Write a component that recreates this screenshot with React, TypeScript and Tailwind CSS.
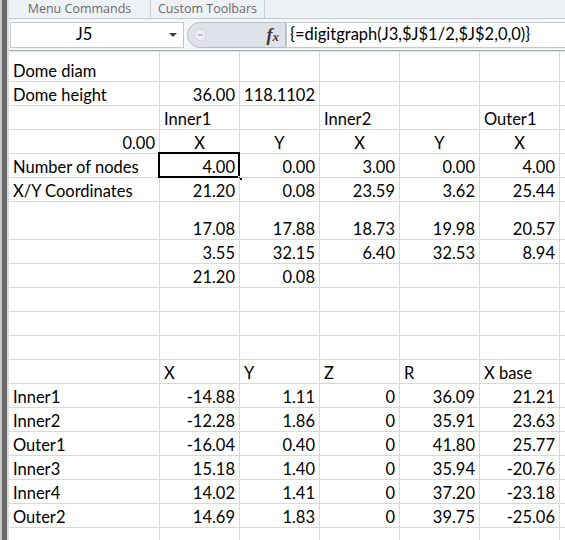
import React from "react";

type Cell = { t: string; a?: "l" | "r" | "c" };

const L = (t: string): Cell => ({ t, a: "l" });
const R = (t: string): Cell => ({ t, a: "r" });
const C = (t: string): Cell => ({ t, a: "c" });
const E: Cell = { t: "" };

// row height, cells A..G
const rows: { h: string; cells: Cell[] }[] = [
  { h: "h-[30px]", cells: [L("Dome diam"), E, E, E, E, E, E] },
  { h: "h-[24px]", cells: [L("Dome height"), R("36.00"), R("118.1102"), E, E, E, E] },
  { h: "h-[24px]", cells: [E, L("Inner1"), E, L("Inner2"), E, L("Outer1"), E] },
  { h: "h-[24px]", cells: [R("0.00"), C("X"), C("Y"), C("X"), C("Y"), C("X"), E] },
  { h: "h-[24px]", cells: [L("Number of nodes"), R("4.00"), R("0.00"), R("3.00"), R("0.00"), R("4.00"), E] },
  { h: "h-[24px]", cells: [L("X/Y Coordinates"), R("21.20"), R("0.08"), R("23.59"), R("3.62"), R("25.44"), E] },
  { h: "h-[38px]", cells: [E, R("17.08"), R("17.88"), R("18.73"), R("19.98"), R("20.57"), E] },
  { h: "h-[24px]", cells: [E, R("3.55"), R("32.15"), R("6.40"), R("32.53"), R("8.94"), E] },
  { h: "h-[24px]", cells: [E, R("21.20"), R("0.08"), E, E, E, E] },
  { h: "h-[24px]", cells: [E, E, E, E, E, E, E] },
  { h: "h-[24px]", cells: [E, E, E, E, E, E, E] },
  { h: "h-[24px]", cells: [E, E, E, E, E, E, E] },
  { h: "h-[24px]", cells: [E, L("X"), L("Y"), L("Z"), L("R"), L("X base"), E] },
  { h: "h-[24px]", cells: [L("Inner1"), R("-14.88"), R("1.11"), R("0"), R("36.09"), R("21.21"), E] },
  { h: "h-[24px]", cells: [L("Inner2"), R("-12.28"), R("1.86"), R("0"), R("35.91"), R("23.63"), E] },
  { h: "h-[24px]", cells: [L("Outer1"), R("-16.04"), R("0.40"), R("0"), R("41.80"), R("25.77"), E] },
  { h: "h-[24px]", cells: [L("Inner3"), R("15.18"), R("1.40"), R("0"), R("35.94"), R("-20.76"), E] },
  { h: "h-[24px]", cells: [L("Inner4"), R("14.02"), R("1.41"), R("0"), R("37.20"), R("-23.18"), E] },
  { h: "h-[24px]", cells: [L("Outer2"), R("14.69"), R("1.83"), R("0"), R("39.75"), R("-25.06"), E] },
  { h: "h-[24px]", cells: [E, E, E, E, E, E, E] },
];

const colW = ["w-[151px]", "w-[80px]", "w-[80px]", "w-[80px]", "w-[80px]", "w-[80px]", "w-[80px]"];

const alignClass = (a?: string) =>
  a === "r" ? "justify-end" : a === "c" ? "justify-center" : "justify-start";

export default function App() {
  return (
    <div
      className="w-[565px] h-[540px] overflow-hidden bg-white flex"
      style={{ fontFamily: "Lato, 'Liberation Sans', sans-serif" }}
    >
      {/* left window edge */}
      <div className="w-[2px] shrink-0 bg-[#c9c9c9]" />
      <div className="w-[5px] shrink-0 bg-[#6a6a6a]" />
      <div className="w-[2px] shrink-0 bg-[#dcdcdc]" />

      <div className="flex-1 flex flex-col min-w-0">
        {/* tabs */}
        <div
          className="h-[19px] shrink-0 flex items-stretch bg-[#eef1f5] border-b border-[#c3c8cf] text-[12.5px] text-[#6b6b6b]"
          style={{ fontFamily: "'Open Sans', sans-serif" }}
        >
          <div className="w-[142px] flex items-center justify-center border-r border-[#cdd1d7] leading-none">
            Menu Commands
          </div>
          <div className="w-[114px] flex items-center justify-center border-r border-[#cdd1d7] leading-none">
            Custom Toolbars
          </div>
        </div>

        {/* formula bar */}
        <div className="h-[32px] shrink-0 flex items-center bg-[#f4f6f8] border-b border-[#a9adb3]">
          <div className="ml-[1px] h-[26px] w-[174px] bg-white border border-[#c4c8ce] flex items-center relative">
            <span className="w-[146px] text-center text-[16.5px] text-black">J5</span>
            <span className="absolute left-[158px] top-[10px] w-0 h-0 border-l-[4px] border-r-[4px] border-t-[4px] border-l-transparent border-r-transparent border-t-[#3c3c3c]" />
          </div>
          <div className="ml-[3px] h-[26px] w-[99px] rounded-l-full bg-[#dfe3e9] border border-[#b7bdc5] flex items-center relative">
            <span className="ml-[6px] w-[12px] h-[12px] rounded-full bg-[#eef0f3] border border-[#d2d6dc] flex items-center justify-center">
              <span className="w-[5px] h-[2px] bg-[#c0c4ca]" />
            </span>
            <span
              className="ml-auto mr-[6px] text-[18px] italic font-bold text-[#3a3a3a] leading-none"
              style={{ fontFamily: "'Liberation Serif', serif" }}
            >
              f<span className="text-[13px]">x</span>
            </span>
          </div>
          <div className="h-[26px] flex-1 bg-white border border-[#c4c8ce] border-r-0 flex items-center pl-[3px] text-[16.5px] text-black whitespace-nowrap">
            {"{=digitgraph(J3,$J$1/2,$J$2,0,0)}"}
          </div>
        </div>
        <div className="h-[1px] shrink-0 bg-[#e3e5e8]" />

        {/* sheet grid */}
        <div className="flex flex-col text-[16.5px] text-black">
          {rows.map((row, ri) => (
            <div key={ri} className={`flex shrink-0 ${row.h}`}>
              {row.cells.map((cell, ci) => {
                const selected = ri === 4 && ci === 1;
                return (
                  <div
                    key={ci}
                    className={`${colW[ci]} shrink-0 border-r border-b border-[#d8d8d8] flex items-end px-[4px] pb-0 leading-[20px] whitespace-nowrap relative ${alignClass(cell.a)}`}
                  >
                    {cell.t}
                    {selected && (
                      <>
                        <span className="absolute left-[-2px] top-[-2px] right-[-1px] bottom-[-1px] border-2 border-black" />
                        <span className="absolute right-[-4px] bottom-[-4px] w-[5px] h-[5px] bg-black border border-white" />
                      </>
                    )}
                  </div>
                );
              })}
            </div>
          ))}
        </div>
      </div>
    </div>
  );
}
